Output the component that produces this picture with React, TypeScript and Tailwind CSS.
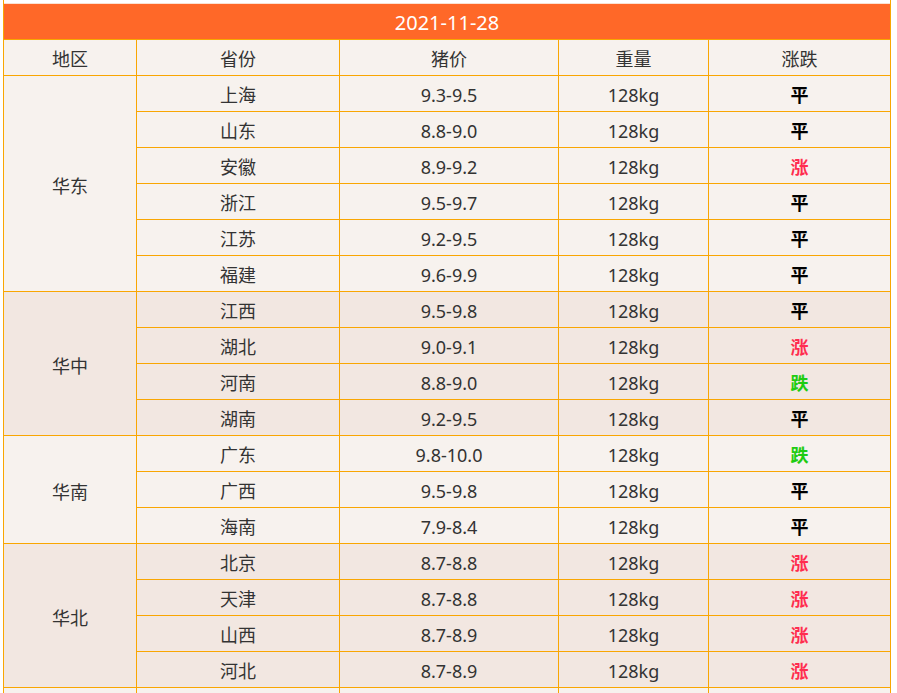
const regions = [
  {
    name: "华东",
    bg: "bg-[#f7f2ee]",
    rows: [
      ["上海", "9.3-9.5", "平"],
      ["山东", "8.8-9.0", "平"],
      ["安徽", "8.9-9.2", "涨"],
      ["浙江", "9.5-9.7", "平"],
      ["江苏", "9.2-9.5", "平"],
      ["福建", "9.6-9.9", "平"],
    ],
  },
  {
    name: "华中",
    bg: "bg-[#f2e7e1]",
    rows: [
      ["江西", "9.5-9.8", "平"],
      ["湖北", "9.0-9.1", "涨"],
      ["河南", "8.8-9.0", "跌"],
      ["湖南", "9.2-9.5", "平"],
    ],
  },
  {
    name: "华南",
    bg: "bg-[#f7f2ee]",
    rows: [
      ["广东", "9.8-10.0", "跌"],
      ["广西", "9.5-9.8", "平"],
      ["海南", "7.9-8.4", "平"],
    ],
  },
  {
    name: "华北",
    bg: "bg-[#f2e7e1]",
    rows: [
      ["北京", "8.7-8.8", "涨"],
      ["天津", "8.7-8.8", "涨"],
      ["山西", "8.7-8.9", "涨"],
      ["河北", "8.7-8.9", "涨"],
    ],
  },
  {
    name: "东北",
    bg: "bg-[#f7f2ee]",
    rows: [
      ["辽宁", "8.6-8.8", "平"],
      ["吉林", "8.5-8.7", "平"],
      ["黑龙江", "8.4-8.6", "平"],
    ],
  },
];

const trendColor: Record<string, string> = {
  涨: "text-[#ff2d4f]",
  跌: "text-[#1fcc12]",
  平: "text-black",
};

const spanClass: Record<number, string> = {
  3: "row-span-3",
  4: "row-span-4",
  6: "row-span-6",
};

export default function App() {
  return (
    <div
      className="min-h-screen bg-white text-[#333] pl-[3px]"
      style={{ fontFamily: '"Noto Sans", "Noto Sans CJK SC", sans-serif' }}
    >
      <div className="w-[888px] border-x border-[#f9a602]">
        <div className="h-[3px] bg-white" />
        {/* Date bar */}
        <div className="h-[36px] border-t border-[#fbe2d2] bg-[#ff6828] text-white text-[20px] flex items-center justify-center leading-none pt-[2px]">
          2021-11-28
        </div>

        {/* Table */}
        <div className="grid grid-cols-[132px_202px_218px_149px_181px] auto-rows-[35px] gap-px bg-[#f9a602] py-px text-[18px] leading-none">
          {["地区", "省份", "猪价", "重量", "涨跌"].map((h) => (
            <div key={h} className="bg-[#f7f2ee] flex items-center justify-center pt-[3px]">
              {h}
            </div>
          ))}

          {regions.map((r) => (
            <>
              <div
                key={r.name}
                className={`${r.bg} ${spanClass[r.rows.length]} flex items-center justify-center pt-[5px]`}
              >
                {r.name}
              </div>
              {r.rows.map(([prov, price, trend], i) => (
                <div key={r.name + i} className="contents">
                  <div className={`${r.bg} col-start-2 flex items-center justify-center pt-[3px]`}>{prov}</div>
                  <div className={`${r.bg} flex items-center justify-center pt-[3px]`}>{price}</div>
                  <div className={`${r.bg} flex items-center justify-center pt-[3px]`}>128kg</div>
                  <div className={`${r.bg} flex items-center justify-center pt-[3px] font-bold ${trendColor[trend]}`}>
                    {trend}
                  </div>
                </div>
              ))}
            </>
          ))}
        </div>
      </div>
    </div>
  );
}
